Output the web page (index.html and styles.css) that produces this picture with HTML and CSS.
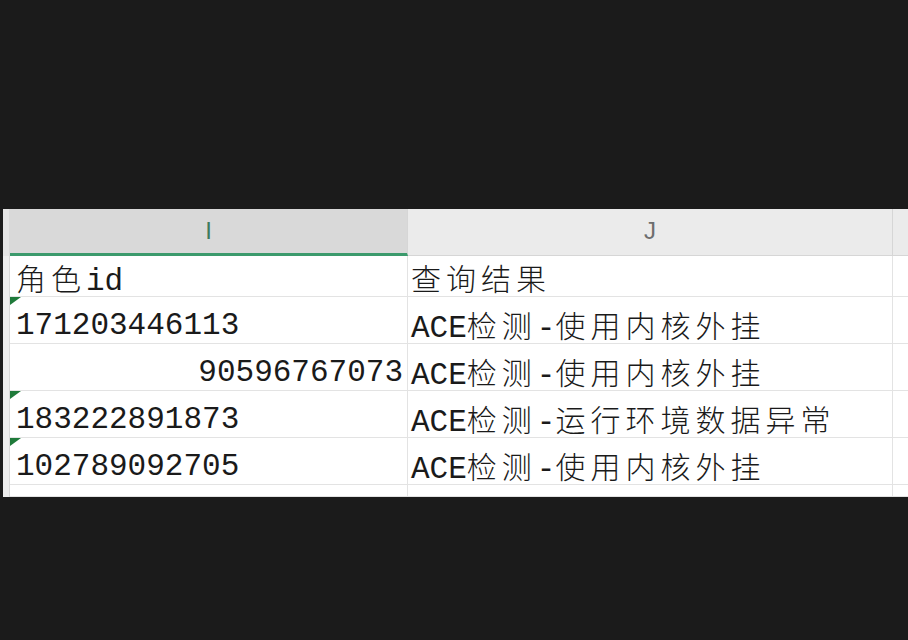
FILE: index.html
```html
<!DOCTYPE html>
<html lang="zh">
<head>
<meta charset="utf-8">
<link rel="stylesheet" href="styles.css">
<title>Sheet</title>
</head>
<body>
<div class="sheet">
  <div class="stub hdr"></div>
  <div class="colhdr sel">I</div>
  <div class="colhdr">J</div>
  <div class="colhdr rest"></div>

  <div class="stub"></div>
  <div class="cell"><span class="v"><span class="cjk">角色</span>id</span></div>
  <div class="cell j"><span class="v"><span class="cjk">查询结果</span></span></div>
  <div class="cell rest"></div>

  <div class="stub"></div>
  <div class="cell flag"><span class="v">171203446113</span></div>
  <div class="cell j"><span class="v">ACE<span class="cjk">检测</span>-<span class="cjk">使用内核外挂</span></span></div>
  <div class="cell rest"></div>

  <div class="stub"></div>
  <div class="cell num"><span class="v">90596767073</span></div>
  <div class="cell j"><span class="v">ACE<span class="cjk">检测</span>-<span class="cjk">使用内核外挂</span></span></div>
  <div class="cell rest"></div>

  <div class="stub"></div>
  <div class="cell flag"><span class="v">183222891873</span></div>
  <div class="cell j"><span class="v">ACE<span class="cjk">检测</span>-<span class="cjk">运行环境数据异常</span></span></div>
  <div class="cell rest"></div>

  <div class="stub"></div>
  <div class="cell flag"><span class="v">102789092705</span></div>
  <div class="cell j"><span class="v">ACE<span class="cjk">检测</span>-<span class="cjk">使用内核外挂</span></span></div>
  <div class="cell rest"></div>

  <div class="stub"></div>
  <div class="cell"></div>
  <div class="cell j"></div>
  <div class="cell rest"></div>
</div>
</body>
</html>
```

FILE: styles.css
```css
html, body {
  margin: 0;
  padding: 0;
  background: #1b1b1b;
}
body {
  padding: 209px 0 0 3px;
  height: 640px;
  box-sizing: border-box;
  overflow: hidden;
}
.sheet {
  width: 905px;
  height: 288px;
  background: #ffffff;
  display: grid;
  grid-template-columns: 7px 398px 485px 1fr;
  grid-template-rows: 47px 41px 47px 47px 47px 47px 1fr;
  overflow: hidden;
}
.stub {
  background: #ededed;
  border-right: 1px solid #d8d8d8;
  box-sizing: border-box;
}
.stub.hdr {
  background: #e4e4e4;
}
.colhdr {
  background: #ebebeb;
  border-right: 1px solid #d6d6d6;
  border-bottom: 1px solid #d6d6d6;
  box-sizing: border-box;
  display: flex;
  align-items: center;
  justify-content: center;
  padding-bottom: 2px;
  font-family: "Liberation Sans", sans-serif;
  font-size: 24px;
  color: #6e6e6e;
}
.colhdr.sel {
  background: #d9d9d9;
  border-bottom: 3px solid #3b9a6c;
  color: #3f7a5c;
  padding-bottom: 0;
}
.colhdr.rest {
  border-right: none;
}
.cell {
  position: relative;
  box-sizing: border-box;
  border-right: 1px solid #e3e3e3;
  border-bottom: 1px solid #e3e3e3;
  display: flex;
  align-items: flex-end;
  padding: 0 4px 0 6px;
  font-family: "Liberation Mono", "Noto Sans CJK SC", monospace;
  font-size: 31px;
  color: #1a1a1a;
  white-space: nowrap;
}
.v {
  display: block;
  line-height: 34px;
  height: 34px;
}
.cell.j {
  padding-left: 3px;
}
.cell.rest {
  border-right: none;
}
.cell.num {
  justify-content: flex-end;
  padding-right: 4px;
}
.cjk {
  font-family: "Noto Sans CJK SC", sans-serif;
  font-weight: 300;
  font-size: 30px;
  line-height: 1;
  letter-spacing: 5px;
}
.flag::before {
  content: "";
  position: absolute;
  left: 0;
  top: 0;
  width: 0;
  height: 0;
  border-top: 8px solid #1f7a3a;
  border-right: 11px solid transparent;
}
```
